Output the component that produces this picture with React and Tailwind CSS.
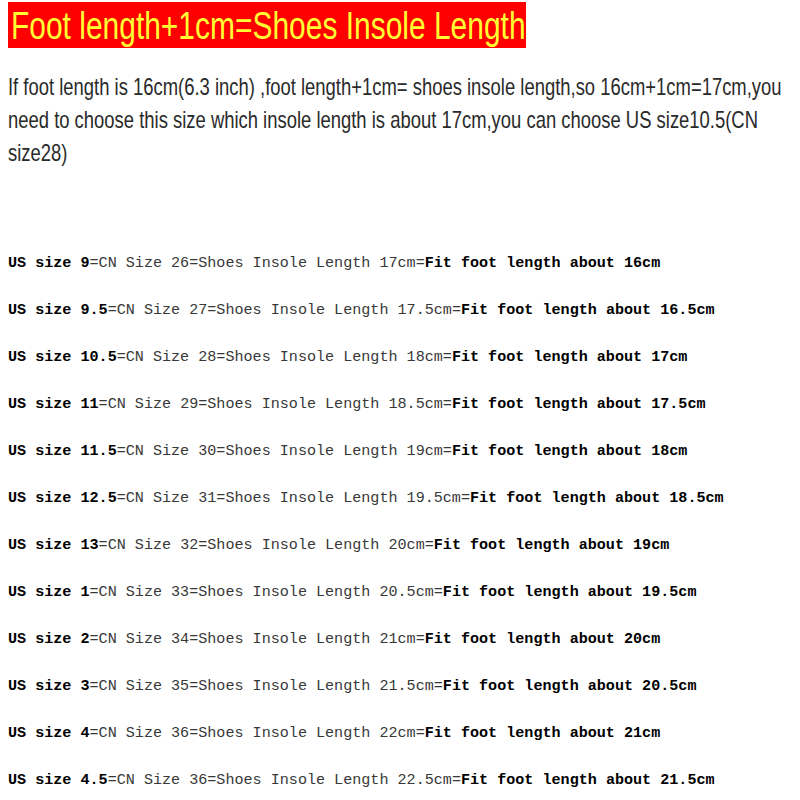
// Shoe size chart: foot length + 1cm = insole length
const ROWS = [
  ['9', '26', '17cm', '16cm'],
  ['9.5', '27', '17.5cm', '16.5cm'],
  ['10.5', '28', '18cm', '17cm'],
  ['11', '29', '18.5cm', '17.5cm'],
  ['11.5', '30', '19cm', '18cm'],
  ['12.5', '31', '19.5cm', '18.5cm'],
  ['13', '32', '20cm', '19cm'],
  ['1', '33', '20.5cm', '19.5cm'],
  ['2', '34', '21cm', '20cm'],
  ['3', '35', '21.5cm', '20.5cm'],
  ['4', '36', '22cm', '21cm'],
  ['4.5', '36', '22.5cm', '21.5cm'],
];

export default function App() {
  return (
    <div className="w-[800px] h-[800px] bg-white overflow-hidden">
      {/* Title banner (narrow Arial look) */}
      <div className="pt-[2px] pl-[8px]">
        <div className="w-[518px] h-[46px] bg-[#fe0000] flex items-center pl-[3px]">
          <span className="origin-left scale-x-[0.768] text-[#ffff33] text-[39px] leading-none whitespace-nowrap font-['Liberation_Sans',sans-serif]">
            Foot length+1cm=Shoes Insole Length
          </span>
        </div>
      </div>

      {/* Explanation */}
      <p className="mt-[22px] pl-[8px] text-[24px] leading-[33px] text-[#2a2a2a] font-['Liberation_Sans',sans-serif]">
        <span className="inline-block origin-left scale-x-[0.768] whitespace-nowrap">
          If foot length is 16cm(6.3 inch) ,foot length+1cm= shoes insole length,so 16cm+1cm=17cm,you
          <br />
          need to choose this size which insole length is about 17cm,you can choose US size10.5(CN
          <br />
          size28)
        </span>
      </p>

      {/* Size rows */}
      <div className="mt-[84px] pl-[8px] flex flex-col font-['Liberation_Mono',monospace] text-[15.1px] text-[#383838]">
        {ROWS.map(([us, cn, insole, foot]) => (
          <div key={us} className="h-[47px] leading-[20px] whitespace-nowrap">
            <b className="text-black">US size {us}</b>=CN Size {cn}=Shoes Insole Length {insole}=
            <b className="text-black">Fit foot length about {foot}</b>
          </div>
        ))}
      </div>
    </div>
  );
}
